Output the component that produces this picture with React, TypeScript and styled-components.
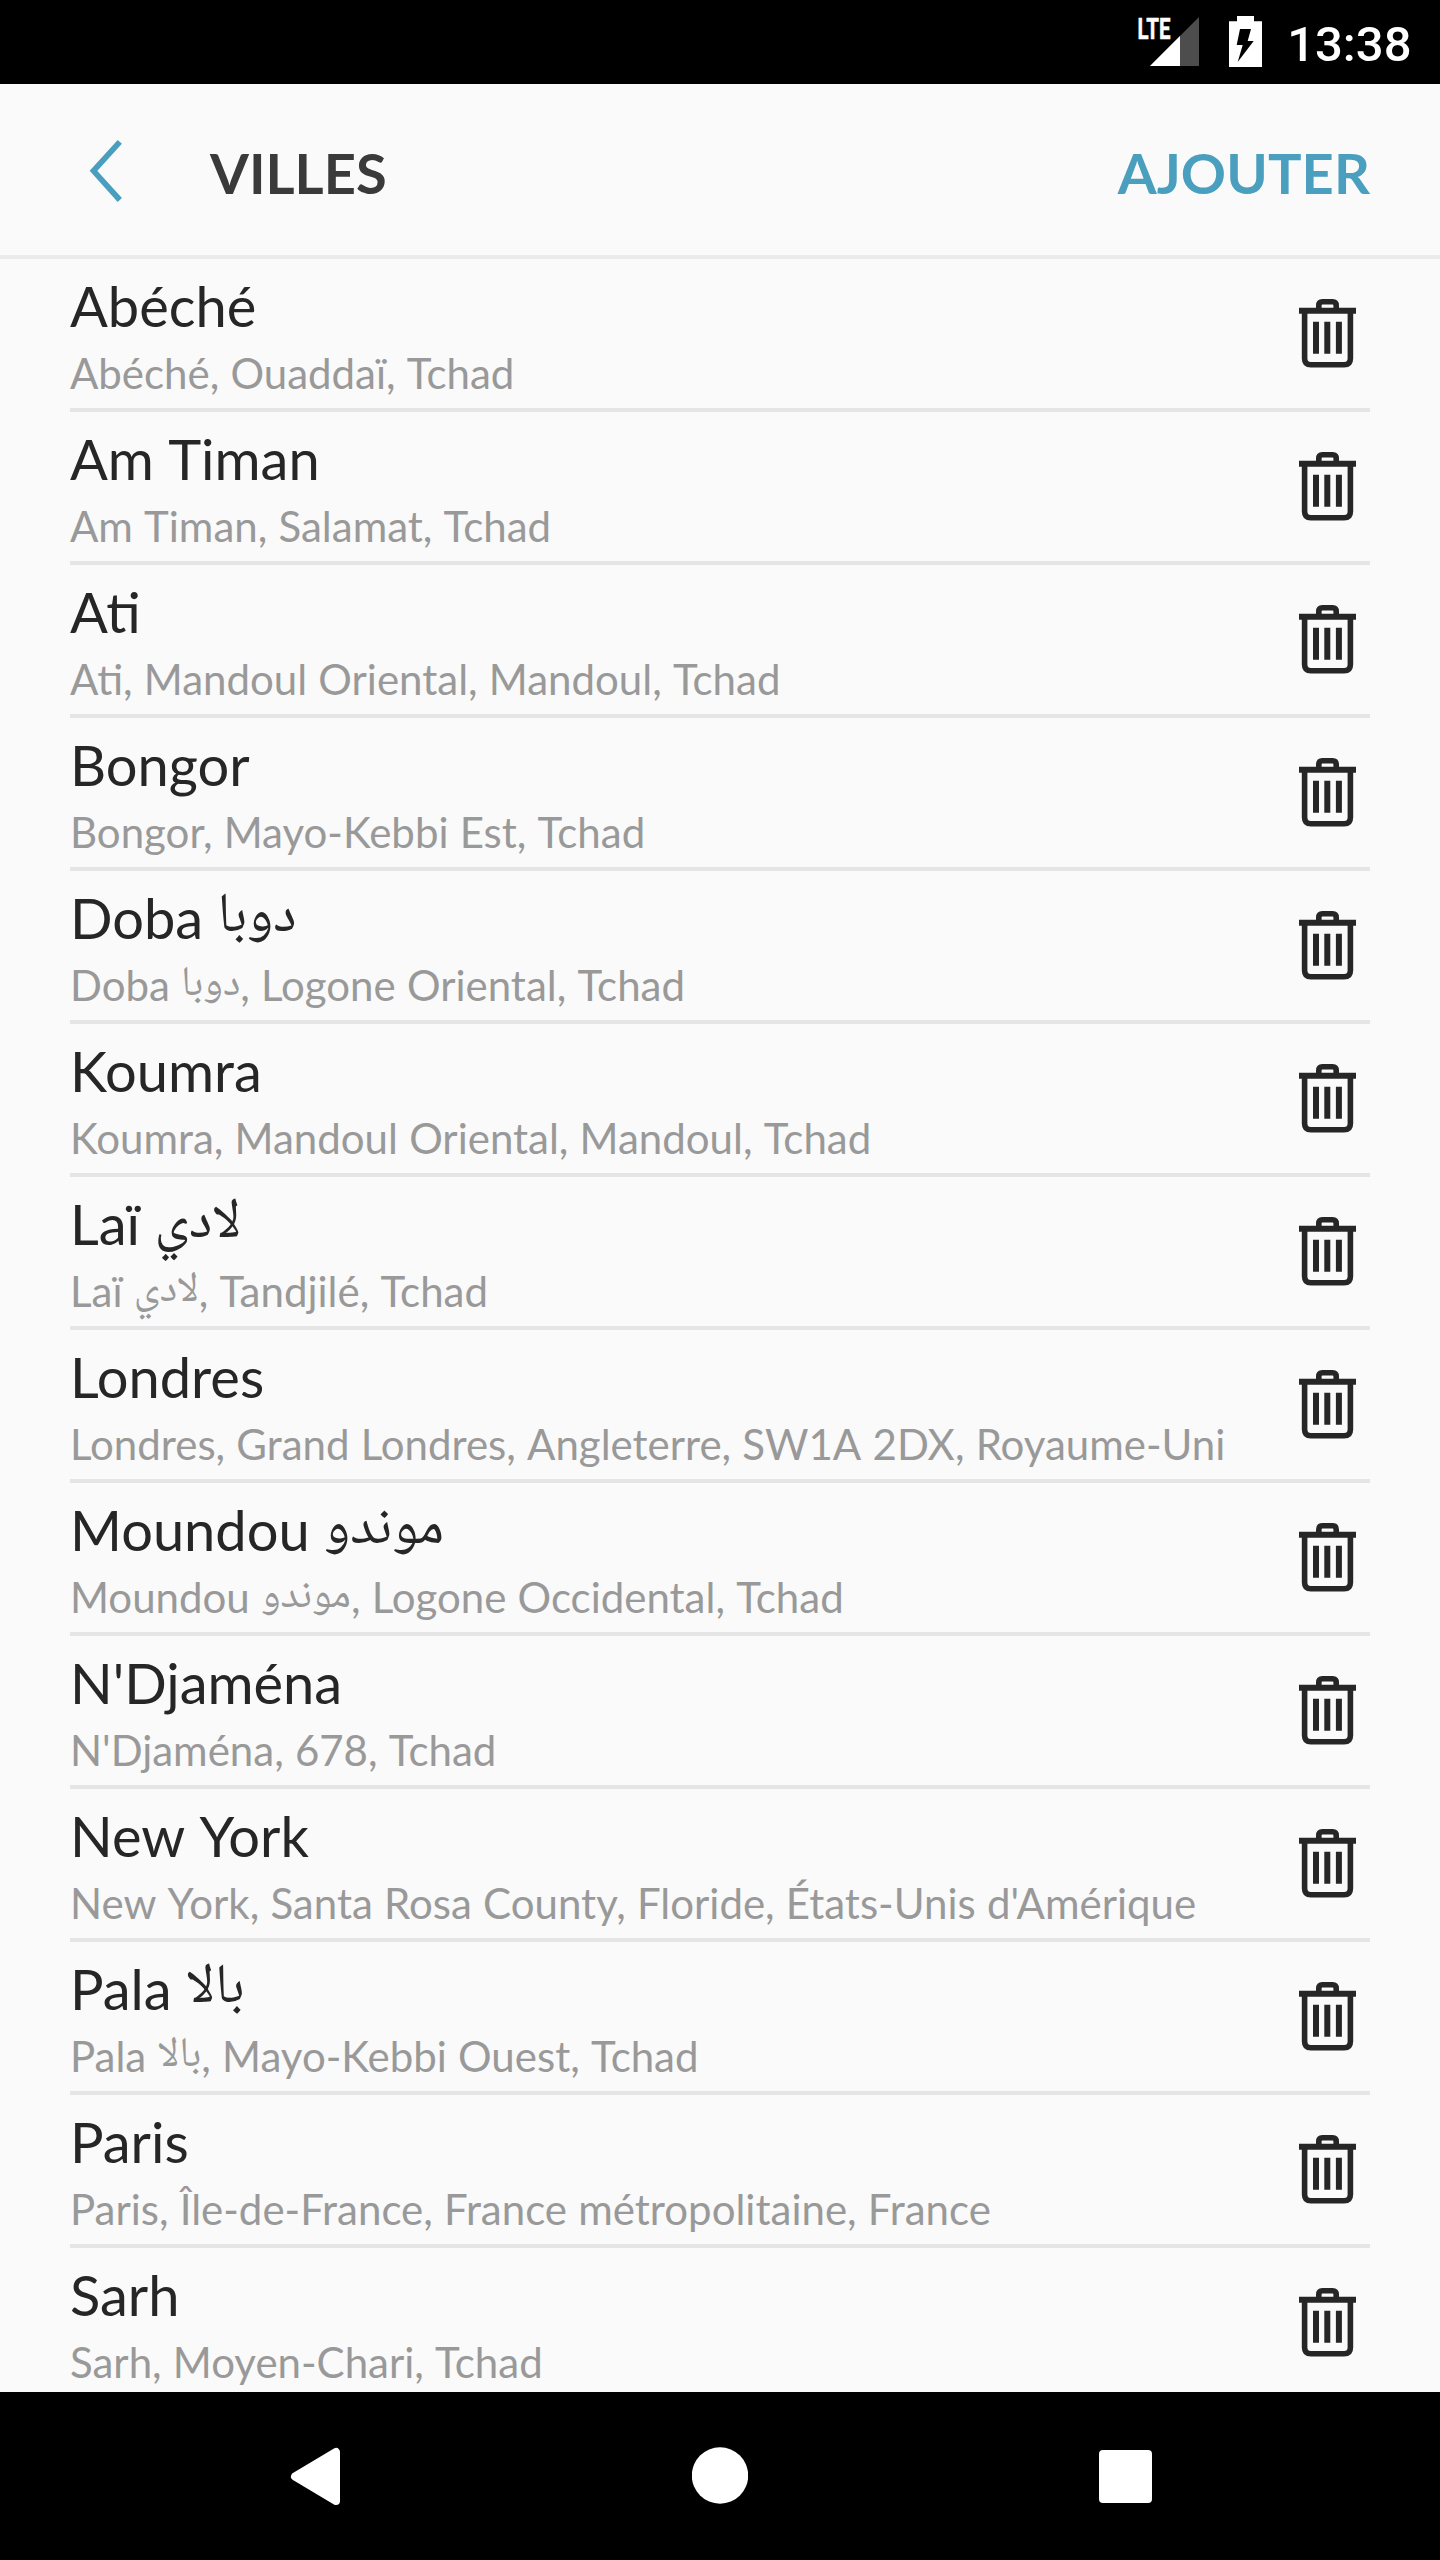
import React, { Fragment } from "react";
import styled, { createGlobalStyle } from "styled-components";

const GlobalStyle = createGlobalStyle`
  * { box-sizing: border-box; }
  body { margin: 0; background: #fafafa; }
`;

const Screen = styled.div`
  width: 1440px;
  height: 2560px;
  display: flex;
  flex-direction: column;
  overflow: hidden;
  background: #fafafa;
  font-family: Lato, "DejaVu Sans", sans-serif;
`;

const StatusBar = styled.div`
  flex: none;
  height: 84px;
  padding: 0 28.5px 0 0;
  display: flex;
  justify-content: flex-end;
  align-items: flex-start;
  background: #000;
`;

const StatusIcons = styled.svg`
  display: block;
  width: 130px;
  height: 84px;
  margin-right: 23.5px;
`;

const Clock = styled.span`
  font: 500 49px/57px Roboto, sans-serif;
  color: #fff;
  padding-top: 16px;
`;

const Header = styled.header`
  flex: none;
  height: 175px;
  padding: 0 70px 0 80px;
  display: flex;
  align-items: center;
  border-bottom: 4px solid #ebebeb;
`;

const BackButton = styled.button`
  width: 130px;
  height: 100px;
  padding: 2px 0 0;
  border: 0;
  background: none;
  display: flex;
  align-items: center;
`;

const Title = styled.h1`
  margin: 0;
  padding-top: 6px;
  flex: 1;
  font-size: 56px;
  line-height: 67px;
  font-weight: 700;
  color: #3a3a3a;
`;

const AddButton = styled.button`
  padding: 6px 0 0;
  border: 0;
  background: none;
  font: 700 56px/67px Lato, sans-serif;
  letter-spacing: 0.1px;
  color: #4a9fbf;
`;

const List = styled.ul`
  flex: 1;
  min-height: 0;
  overflow: hidden;
  margin: 0;
  padding: 0 70px;
  list-style: none;
`;

const Row = styled.li`
  height: 153px;
  display: flex;
  align-items: center;
  border-bottom: 4px solid #e5e5e5;
`;

const Labels = styled.div`
  flex: 1;
  height: 149px;
  padding-top: 13px;
  white-space: nowrap;
`;

const Name = styled.div`
  height: 67px;
  font-size: 56px;
  line-height: 67px;
  color: #262626;
`;

const Place = styled.div`
  margin-top: 9px;
  height: 51px;
  font-size: 42px;
  line-height: 51px;
  word-spacing: 0.45px;
  color: #999;
`;

const Space = styled.span`
  font-kerning: none;
`;

const Arabic = styled.span`
  font-family: "Noto Naskh Arabic", "Noto Naskh Arabic UI", Amiri, "Liberation Serif", serif;
  font-size: 1em;
  line-height: 0;
  vertical-align: 0.14em;
`;

const DeleteButton = styled.button`
  margin: 0 14px 0 0;
  padding: 0;
  border: 0;
  background: none;
  display: flex;
`;

const NavBar = styled.nav`
  flex: none;
  height: 168px;
  display: flex;
  justify-content: space-between;
  align-items: center;
  padding: 0 288px;
  background: #000;
`;

const NavIcon = styled.svg`
  display: block;
  width: 56px;
  height: 60px;
`;

type City = { name: string; local?: string; area: string };

const cities: City[] = [
  { name: "Abéché", area: "Ouaddaï, Tchad" },
  { name: "Am Timan", area: "Salamat, Tchad" },
  { name: "Ati", area: "Mandoul Oriental, Mandoul, Tchad" },
  { name: "Bongor", area: "Mayo-Kebbi Est, Tchad" },
  { name: "Doba", local: "دوبا", area: "Logone Oriental, Tchad" },
  { name: "Koumra", area: "Mandoul Oriental, Mandoul, Tchad" },
  { name: "Laï", local: "لادي", area: "Tandjilé, Tchad" },
  { name: "Londres", area: "Grand Londres, Angleterre, SW1A 2DX, Royaume-Uni" },
  { name: "Moundou", local: "موندو", area: "Logone Occidental, Tchad" },
  { name: "N'Djaména", area: "678, Tchad" },
  { name: "New York", area: "Santa Rosa County, Floride, États-Unis d'Amérique" },
  { name: "Pala", local: "بالا", area: "Mayo-Kebbi Ouest, Tchad" },
  { name: "Paris", area: "Île-de-France, France métropolitaine, France" },
  { name: "Sarh", area: "Moyen-Chari, Tchad" },
];

// Keeps pair kerning inside words but not against the spaces between them.
const Words = ({ text }: { text: string }) => (
  <>
    {text.split(" ").map((word, i) => (
      <Fragment key={i}>
        {i > 0 && <Space> </Space>}
        {word}
      </Fragment>
    ))}
  </>
);

const CityName = ({ city }: { city: City }) => (
  <>
    <Words text={city.name} />
    {city.local && (
      <>
        <Space> </Space>
        <Arabic lang="ar">{city.local}</Arabic>
      </>
    )}
  </>
);

const TrashIcon = () => (
  <svg width="57" height="69" viewBox="0 0 57 69" fill="none" stroke="#262626">
    <path d="M0 11.7H57" strokeWidth="6" />
    <path d="M19.8 11V6.5Q19.8 2.8 23.4 2.8H33.6Q37.2 2.8 37.2 6.5V11" strokeWidth="5.6" />
    <path d="M5.6 12V59.5Q5.6 65.8 11.9 65.8H45.1Q51.4 65.8 51.4 59.5V12" strokeWidth="5.6" />
    <path d="M17 22.7V54.7M28.3 22.7V54.7M39.9 22.7V54.7" strokeWidth="6" />
  </svg>
);

export default function App() {
  return (
    <Screen>
      <GlobalStyle />
      <StatusBar>
        <StatusIcons viewBox="1134 0 130 84">
          <path d="M1150 66L1199 17V66Z" fill="#4d4d4d" />
          <path d="M1150 66L1180 36V66Z" fill="#fff" />
          <text
            x="1137.5"
            y="39"
            fontFamily="Roboto, sans-serif"
            fontWeight="700"
            fontSize="29.5"
            textLength="33"
            lengthAdjust="spacingAndGlyphs"
            fill="#fff"
            stroke="#fff"
            strokeWidth="0.5"
          >
            LTE
          </text>
          <path d="M1237 16H1254V21.3H1262V67H1229V21.3H1237Z" fill="#fff" />
          <path d="M1240 29H1251L1247.7 41H1253.7L1237.7 62L1242.7 45H1236.7Z" fill="#000" />
        </StatusIcons>
        <Clock>13:38</Clock>
      </StatusBar>
      <Header>
        <BackButton aria-label="Retour">
          <svg width="50" height="66" viewBox="80 138 50 66">
            <path
              d="M119.8 141.8L93.5 170.8L119.8 200"
              fill="none"
              stroke="#4a9fbf"
              strokeWidth="5.7"
            />
          </svg>
        </BackButton>
        <Title>VILLES</Title>
        <AddButton>AJOUTER</AddButton>
      </Header>
      <List>
        {cities.map((city) => (
          <Row key={city.name}>
            <Labels>
              <Name>
                <CityName city={city} />
              </Name>
              <Place>
                <CityName city={city} />,<Space> </Space>
                <Words text={city.area} />
              </Place>
            </Labels>
            <DeleteButton aria-label="Supprimer">
              <TrashIcon />
            </DeleteButton>
          </Row>
        ))}
      </List>
      <NavBar>
        <NavIcon viewBox="288 2446 56 60">
          <path
            d="M336 2452V2501L295 2476.5Z"
            fill="#fff"
            stroke="#fff"
            strokeWidth="8"
            strokeLinejoin="round"
          />
        </NavIcon>
        <NavIcon viewBox="692 2446 56 60">
          <circle cx="720" cy="2475.5" r="28.2" fill="#fff" />
        </NavIcon>
        <NavIcon viewBox="1096 2446 56 60">
          <rect x="1099" y="2450" width="53" height="53" rx="4" fill="#fff" />
        </NavIcon>
      </NavBar>
    </Screen>
  );
}
